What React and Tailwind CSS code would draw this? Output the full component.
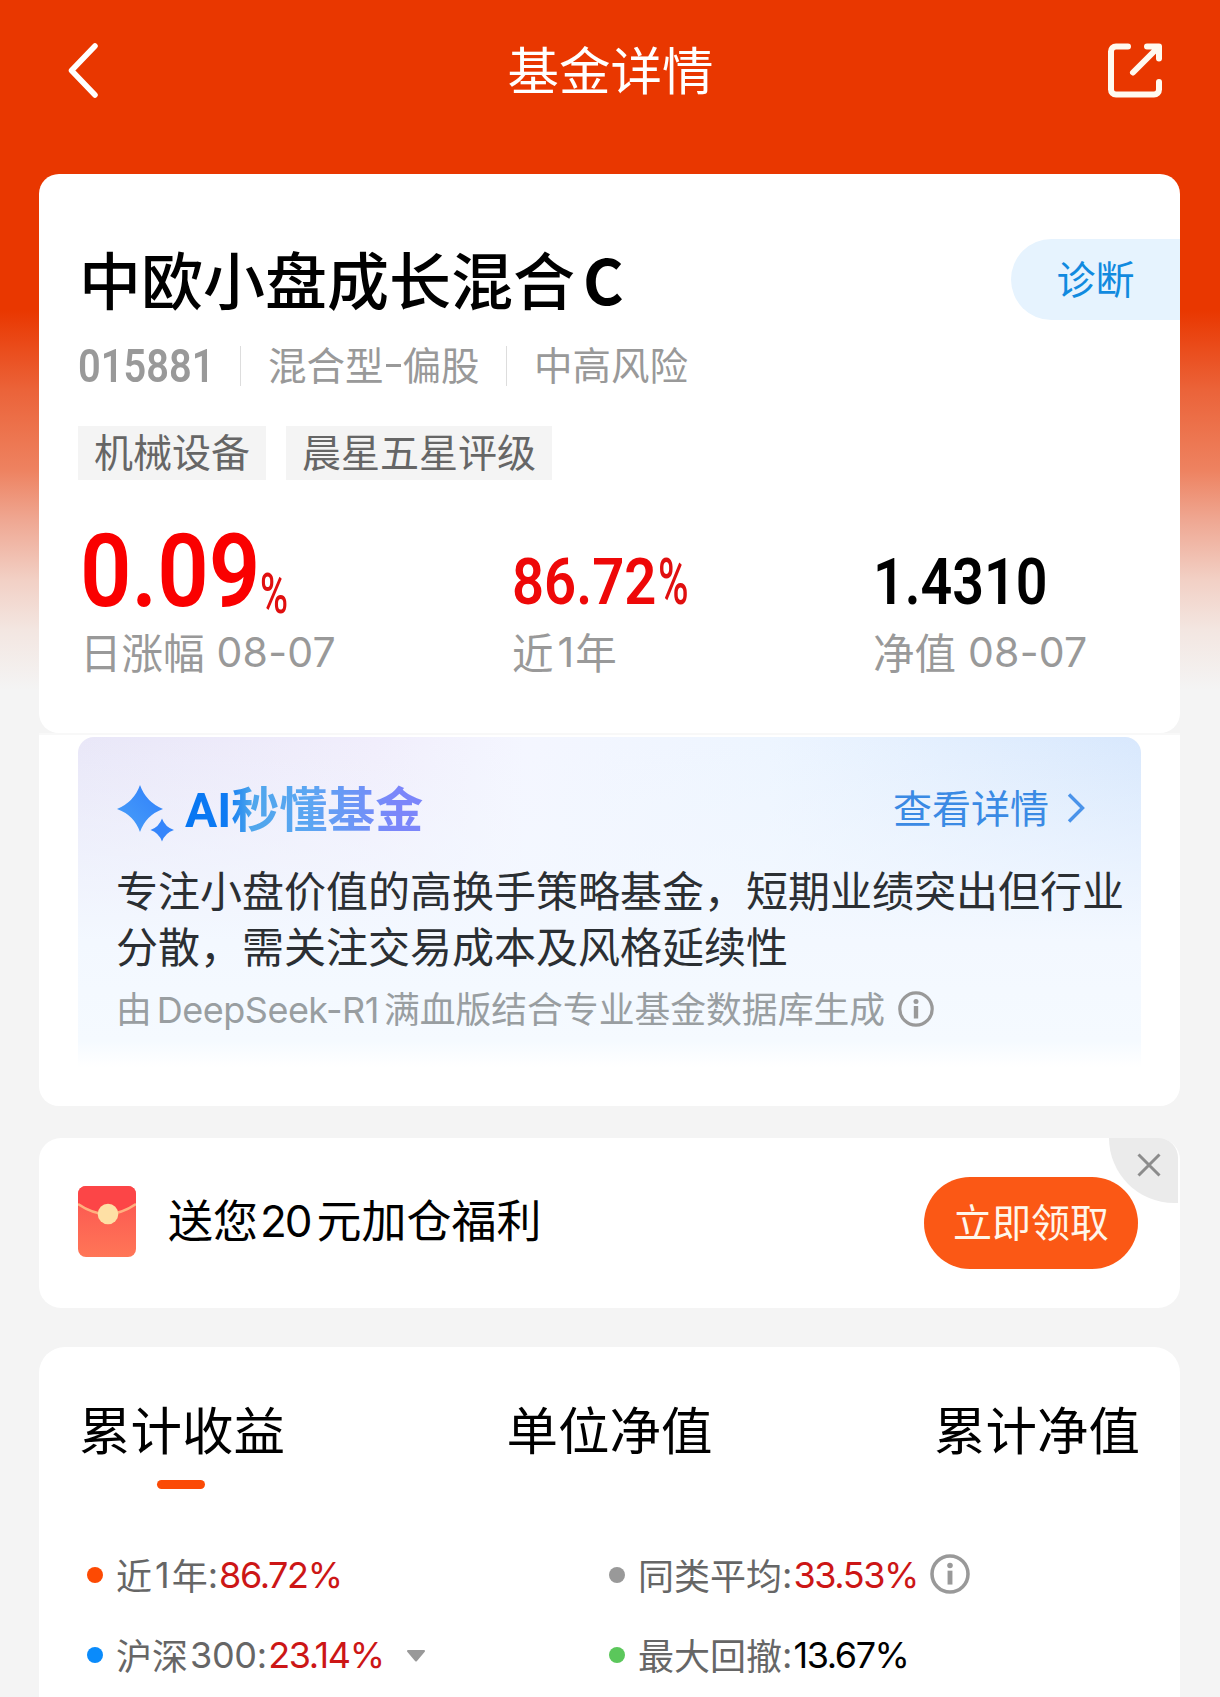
import clsx from 'clsx'

const tags = ['机械设备', '晨星五星评级']

const tabs = [
  { key: 'income', label: '累计收益' },
  { key: 'unit', label: '单位净值' },
  { key: 'total', label: '累计净值' },
]

function InfoIcon({ className }) {
  return (
    <svg viewBox="0 0 36 36" className={className} fill="none">
      <circle cx="18" cy="18" r="16.2" stroke="#999" strokeWidth="3.200" />
      <circle cx="18" cy="10.4" r="2.5" fill="#999" />
      <path d="M18 15V27.500" stroke="#999" strokeWidth="4.400" />
    </svg>
  )
}

function Header() {
  return (
    <header className="flex h-[174px] items-start justify-between pt-[42px] pr-[57px] pl-[67px]">
      <svg viewBox="0 0 32 56" className="h-14 w-8" fill="none" stroke="#fff" strokeWidth="5.500" strokeLinecap="round" strokeLinejoin="round">
        <path d="M28 4L4.500 28.500L28 53" />
      </svg>
      <h1 className="-mt-[12px] ml-[15px] text-[51.500px] leading-[76px] text-white">基金详情</h1>
      <svg viewBox="0 0 56 56" className="h-14 w-14" fill="none" stroke="#fffaf0" strokeWidth="6" strokeLinecap="round" strokeLinejoin="round">
        <path d="M21 4.500H9a5 5 0 0 0-5 5v38a5 5 0 0 0 5 5h38a5 5 0 0 0 5-5V40" />
        <path d="M40 4.500h12v12M51 5.500L26 30.500" />
      </svg>
    </header>
  )
}

function Stat({ label, date, className, children }) {
  return (
    <div className={clsx('flex flex-col', className)}>
      <div className="flex h-[92px] items-end font-[Roboto] font-bold">{children}</div>
      <p className="mt-[6px] flex h-[60px] items-center text-[41.500px] whitespace-pre text-[#999]">
        {label}
        {date && <span className="ml-[12px] pt-[3px] font-[Inter] text-[41px] tracking-[0.2px]">{date}</span>}
      </p>
    </div>
  )
}

function FundCard() {
  return (
    <section className="h-[559px] rounded-[20px] bg-white pt-[65px] pl-[39px]">
      <div className="flex h-[81px] items-center justify-between">
        <h2 className="ml-[1px] flex pb-[3px] text-[62px] leading-[78px] font-medium text-black">
          中欧小盘成长混合<span className="ml-[8px] font-bold">C</span>
        </h2>
        <button className="h-[81px] w-[169px] rounded-l-full bg-[#e6f3fe] pb-[5px] text-[39px] text-[#118adf]">诊断</button>
      </div>

      <div className="mt-[17px] flex h-[54px] items-center text-[38.500px] text-[#999]">
        <div className="mt-[4px] w-[162px]">
          <span className="inline-block origin-left scale-x-[0.865] font-[Roboto] text-[46px] font-semibold">015881</span>
        </div>
        <span className="mt-[3px] h-10 w-px bg-[#ddd]" />
        <span className="ml-[27px] flex w-[238px] items-center">
          混合型<span className="mx-[2px] mt-[2px] h-[3px] w-[15px] bg-[#999]" />偏股
        </span>
        <span className="mt-[3px] h-10 w-px bg-[#ddd]" />
        <span className="ml-[27px]">中高风险</span>
      </div>

      <div className="mt-[35px] flex gap-5">
        {tags.map(tag => (
          <span key={tag} className="h-[54px] bg-[#f4f4f4] px-4 text-[39px] leading-[49px] text-[#666]">{tag}</span>
        ))}
      </div>

      <div className="mt-[43px] flex">
        <Stat label="日涨幅" date="08-07" className="ml-[2px] w-[432px]">
          <span className="w-[180px] origin-left scale-x-[0.885] text-[102px] leading-[88px] font-semibold text-[#fa0000]">0.09</span>
          <span className="-mb-[4px] origin-left scale-x-[0.68] text-[56px] leading-[50px] font-medium text-[#e00f0f]">%</span>
        </Stat>
        <Stat
          label={<>近<span className="mr-[1px] ml-[4px] pt-[3px] font-[Inter] text-[41px]">1</span>年</>}
          className="w-[361px]"
        >
          <span className="origin-left scale-x-[0.865] text-[65px] leading-[66px] font-semibold text-[#ee0808]">86.72</span>
          <span className="-ml-[21px] origin-left scale-x-[0.64] text-[65px] leading-[66px] font-medium text-[#e00f0f]">%</span>
        </Stat>
        <Stat label="净值" date="08-07">
          <span className="origin-left scale-x-[0.855] text-[65px] leading-[66px] font-semibold text-black">1.4310</span>
        </Stat>
      </div>
    </section>
  )
}

function AiCard() {
  return (
    <section className="h-[373px] rounded-b-[20px] border-t-2 border-[#f8f8f8] bg-white px-[39px] pt-[2px]">
      <div className="h-[330px] rounded-t-2xl bg-[linear-gradient(to_bottom,transparent_0%,#f3f8ff_62%,#f5faff_92%,#fff_100%),linear-gradient(to_right,#e9e7f8_0%,#f1eefc_28%,#f4f6ff_42%,#edf5ff_65%,#d8e8fd_100%)] pt-[36px] pl-[38px]">
        <div className="flex h-[70px] items-center">
          <svg viewBox="0 0 60 60" className="mt-[9px] h-[60px] w-[60px]">
            <defs>
              <linearGradient id="star" x1="0" y1="1" x2="1" y2="0">
                <stop offset="0" stopColor="#4aa0f8" />
                <stop offset="1" stopColor="#2f7ffb" />
              </linearGradient>
            </defs>
            <path d="M24 2Q30 19 47 26Q30 32 24 49Q18 32 1 26Q18 19 24 2Z" fill="url(#star)" />
            <path d="M46 35.500Q49 44 58 47Q49 50 46 58.500Q43 50 34.500 47Q43 44 46 35.500Z" fill="#3585fb" />
          </svg>
          <h3 className="ml-[9px] bg-[linear-gradient(to_right,#0676f2_0%,#0f7bf3_18%,#4fa6ec_28%,#5ba6f2_52%,#7b86fa_88%)] bg-clip-text text-[48px] leading-[70px] font-bold text-transparent">
            <span className="font-[Roboto]">AI</span>秒懂基金
          </h3>
          <a className="-mt-[3px] mr-[56px] ml-auto flex items-center text-[39px] text-[#3a8ae4]">
            查看详情
            <svg viewBox="0 0 18 30" className="mt-[3px] ml-[18px] h-[30px] w-[18px]" fill="none" stroke="#4a93ea" strokeWidth="3.400">
              <path d="M2 1.500L15.500 15L2 28.500" />
            </svg>
          </a>
        </div>
        <p className="mt-[18px] w-[1020px] text-[42px] leading-[56px] text-[#2b2f33]">
          专注小盘价值的高换手策略基金，短期业绩突出但行业分散，需关注交易成本及风格延续性
        </p>
        <div className="mt-[8px] flex h-[54px] items-center text-[35.800px] text-[#999ea1]">
          由<span className="mx-[5px] mt-[3px] font-[Inter] text-[36px] tracking-[-0.5px]">DeepSeek-R1</span>满血版结合专业基金数据库生成
          <InfoIcon className="mt-[2px] ml-[13px] h-9 w-9" />
        </div>
      </div>
    </section>
  )
}

function RedPacket() {
  return (
    <svg viewBox="0 0 58 71" className="-mt-[3px] h-[71px] w-[58px]">
      <defs>
        <linearGradient id="packet" x1="0" y1="0" x2="0" y2="1">
          <stop offset="0" stopColor="#fb5250" />
          <stop offset="1" stopColor="#ff7657" />
        </linearGradient>
        <clipPath id="packetClip">
          <rect width="58" height="71" rx="8" />
        </clipPath>
      </defs>
      <g clipPath="url(#packetClip)">
        <rect width="58" height="71" fill="url(#packet)" />
        <path d="M0 0H58V18Q29 38 0 18Z" fill="#fc4547" />
        <path d="M0 18Q29 38 58 18" fill="none" stroke="#ffb07f" strokeWidth="2.500" />
      </g>
      <circle cx="30" cy="28" r="10.300" fill="#fee0a5" />
    </svg>
  )
}

function PromoCard() {
  return (
    <section className="relative mt-8 flex h-[170px] items-center rounded-[22px] bg-white pr-[42px] pl-[39px]">
      <RedPacket />
      <p className="-mt-[8px] ml-[32px] flex items-center text-[45px] leading-[66px] text-black">
        送您<span className="mr-[6px] ml-[2px] pt-[4px] font-[Inter] text-[44px] tracking-[-2px]">20</span>元加仓福利
      </p>
      <button className="ml-auto h-[92px] w-[214px] rounded-full bg-[#fb5815] pb-[5px] text-[39px] text-[#fff6ea]">立即领取</button>
      <span className="absolute top-0 right-[2px] flex h-[65px] w-[69px] items-center justify-center rounded-tr-[20px] rounded-bl-[66px] bg-[#ebebeb]">
        <svg viewBox="0 0 24 24" className="mb-[11px] ml-[11px] h-6 w-6" stroke="#8c8c8c" strokeWidth="3">
          <path d="M1.500 1.500L22.500 22.500M22.500 1.500L1.500 22.500" />
        </svg>
      </span>
    </section>
  )
}

function Legend({ dot, name, value, valueClass, children }) {
  return (
    <div className="flex h-20 items-center text-[36px] text-[#666]">
      <span className={clsx('mr-[13px] h-4 w-4 rounded-full', dot)} />
      <span className="-mt-[3px] flex items-center">{name}</span>
      <span className="font-[Inter]">:</span>
      <span className={clsx('ml-px font-[Inter]', valueClass)}>{value}</span>
      {children}
    </div>
  )
}

function ChartCard() {
  return (
    <section className="mt-[39px] h-[350px] rounded-t-[26px] bg-white pt-[43px] pr-10 pl-10">
      <div className="flex justify-between">
        {tabs.map((tab, i) => (
          <div key={tab.key} className="text-[51.500px] leading-[75px] text-black">
            {tab.label}
            {i === 0 && <div className="mt-[15px] ml-[78px] h-[9px] w-12 rounded-full bg-[#fb4a05]" />}
          </div>
        ))}
      </div>
      <div className="mt-[46px] ml-2 grid grid-cols-[522px_1fr]">
        <Legend
          dot="bg-[#fd4a03]"
          name={<>近<span className="mr-[2px] ml-[3px] pt-[3px] font-[Inter]">1</span>年</>}
          value="86.72%"
          valueClass="text-[#cc1616] tracking-[-1.400px]"
        />
        <Legend dot="bg-[#999]" name="同类平均" value="33.53%" valueClass="text-[#cc1616] tracking-[-1.400px]">
          <InfoIcon className="-mt-[2px] ml-3 h-10 w-10" />
        </Legend>
        <Legend
          dot="bg-[#0a8bfb]"
          name={<>沪深<span className="ml-[2px] pt-[3px] font-[Inter] tracking-[-0.3px]">300</span></>}
          value="23.14%"
          valueClass="text-[#cc1616] tracking-[-1.400px]"
        >
          <svg viewBox="0 0 20 12" className="mt-[2px] ml-[22px] h-3 w-5">
            <path d="M2 1H18L10 10.500Z" fill="#999" stroke="#999" strokeWidth="2" strokeLinejoin="round" />
          </svg>
        </Legend>
        <Legend dot="bg-[#5bc75b]" name="最大回撤" value="13.67%" valueClass="text-black tracking-[-1.400px]" />
      </div>
    </section>
  )
}

export default function App() {
  return (
    <div className="h-[1697px] w-[1220px] overflow-hidden bg-[#f4f4f4] bg-[linear-gradient(to_bottom,#e93700_0px,#e93700_310px,#eb6339_390px,#ee8260_470px,#efa792_520px,#f2d0c5_580px,#f3e6e1_630px,#f4f4f4_690px)] font-['Noto_Sans_CJK_SC',sans-serif]">
      <Header />
      <main className="mr-10 ml-[39px]">
        <FundCard />
        <AiCard />
        <PromoCard />
        <ChartCard />
      </main>
    </div>
  )
}
